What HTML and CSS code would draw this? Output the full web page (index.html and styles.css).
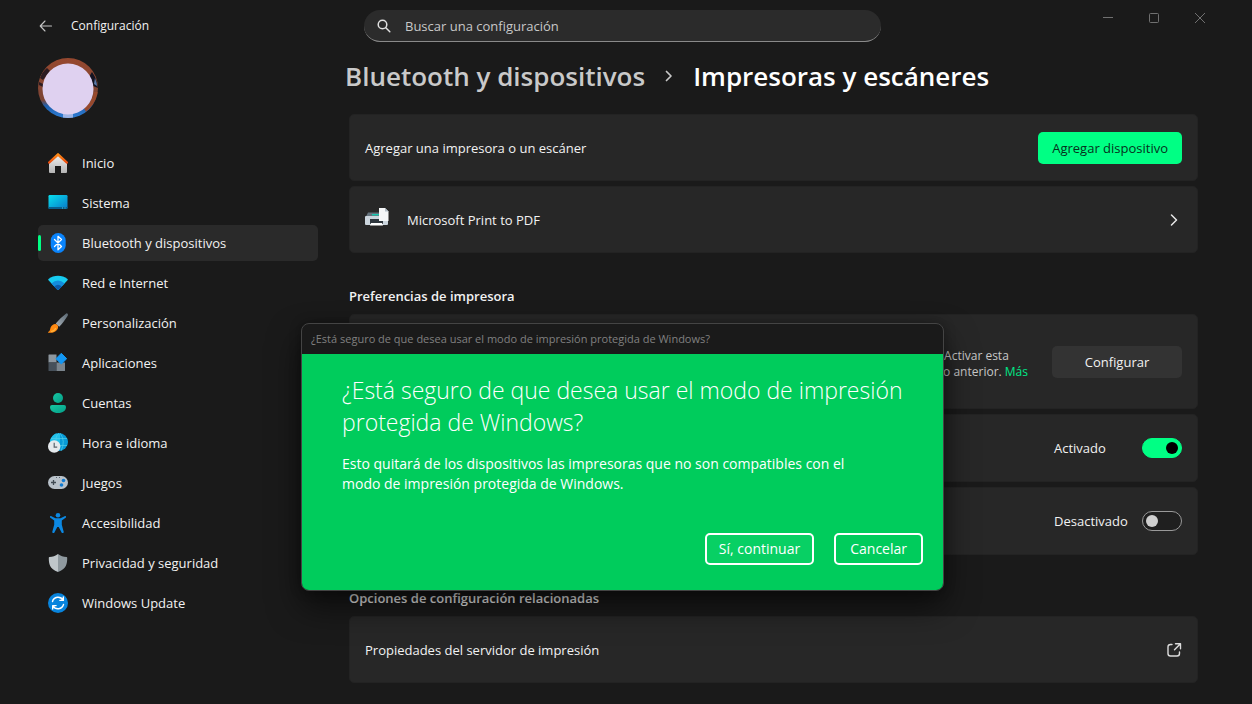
FILE: index.html
```html
<!DOCTYPE html>
<html lang="es">
<head>
<meta charset="utf-8">
<meta name="viewport" content="width=device-width, initial-scale=1">
<title>Configuración</title>
<link rel="stylesheet" href="styles.css">
</head>
<body>
<header class="titlebar">
  <div class="titlebar-left">
    <button class="icon-button" type="button" aria-label="Atrás">
      <svg width="14" height="14" viewBox="0 0 14 14" fill="none" stroke="#c4c4c4" stroke-width="1.1" stroke-linecap="round" stroke-linejoin="round"><path d="M12.500 7H1.500M6 2 1.200 7 6 12"/></svg>
    </button>
    <span class="app-name">Configuración</span>
  </div>
  <label class="search">
    <svg width="14" height="14" viewBox="0 0 14 14" fill="none" stroke="#e0e0e0" stroke-width="1.500" stroke-linecap="round"><circle cx="5.500" cy="5.500" r="4.300"/><path d="m8.800 8.800 4 4"/></svg>
    <input class="search-input" type="text" placeholder="Buscar una configuración" aria-label="Buscar una configuración">
  </label>
  <div class="window-controls">
    <button class="icon-button" type="button" aria-label="Minimizar"><svg width="12" height="12" viewBox="0 0 12 12" fill="none" stroke="#707070"><path d="M1 5.500h10"/></svg></button>
    <button class="icon-button" type="button" aria-label="Maximizar"><svg width="12" height="12" viewBox="0 0 12 12" fill="none" stroke="#707070"><rect x="1.500" y="1.500" width="9" height="9" rx="1"/></svg></button>
    <button class="icon-button" type="button" aria-label="Cerrar"><svg width="12" height="12" viewBox="0 0 12 12" fill="none" stroke="#707070"><path d="m1 1 10 10M11 1 1 11"/></svg></button>
  </div>
</header>

<div class="layout">
  <aside class="sidebar">
    <svg class="avatar" width="60" height="60" viewBox="0 0 60 60">
      <defs>
        <linearGradient id="av" x1="0" y1="0" x2="0" y2="1"><stop offset="0" stop-color="#96482f"/><stop offset=".7" stop-color="#7c4434"/><stop offset=".8" stop-color="#1e5fae"/><stop offset="1" stop-color="#2f7fd6"/></linearGradient>
        <clipPath id="av-clip"><circle cx="30" cy="30" r="30"/></clipPath>
      </defs>
      <g clip-path="url(#av-clip)">
        <rect width="60" height="60" fill="url(#av)"/>
        <path d="M54 14q5 7 6 16l-5-2-4-9z" fill="#151422"/><path d="M57 20q2 5 2 8l-3-2z" fill="#5b7aa8"/>
        <path d="M2 20q2-6 7-10l3 3-7 9z" fill="#2c1c22"/><path d="M1 24l4 2v3l-4-2z" fill="#2c1c22"/>
        <path d="M60 34q-3 13-12 20l-2-4q9-7 10-16z" fill="#97492d"/>
        <path d="M25 56h10v4H25z" fill="#9db4e4"/>
      </g>
      <circle cx="30" cy="31" r="25.500" fill="#dfd1f0"/>
    </svg>
    <nav>
      <ul class="nav">
        <li><a class="nav-link" href="#"><svg class="nav-icon" viewBox="0 0 20 20"><defs><linearGradient id="hw" x1="0" y1="0" x2="0" y2="1"><stop stop-color="#f0f0f0"/><stop offset="1" stop-color="#b4b4b4"/></linearGradient><linearGradient id="hr" x1="0" y1="0" x2="0" y2="1"><stop stop-color="#ff9518"/><stop offset="1" stop-color="#e8420c"/></linearGradient></defs><path d="M1 9.500 10 2l9 7.500V19a1 1 0 0 1-1 1h-5v-7H7v7H2a1 1 0 0 1-1-1z" fill="url(#hw)"/><path d="M9.200.4a1.200 1.200 0 0 1 1.600 0l8.900 8.300a1.100 1.100 0 0 1-1.500 1.700L10 3.200l-8.200 7.200A1.100 1.100 0 0 1 .3 8.700z" fill="url(#hr)"/></svg>Inicio</a></li>
        <li><a class="nav-link" href="#"><svg class="nav-icon" viewBox="0 0 20 20"><defs><linearGradient id="sy" x1="0" y1="0" x2="1" y2="1"><stop stop-color="#08e0ee"/><stop offset="1" stop-color="#0878c8"/></linearGradient></defs><rect x=".5" y="2" width="19" height="14" rx="1.200" fill="url(#sy)"/><path d="M.5 14h19v.7a1.300 1.300 0 0 1-1.300 1.300H1.800a1.300 1.300 0 0 1-1.300-1.300z" fill="#086090"/><path d="M14 15h1M16.500 15h1" stroke="#45c8ed"/></svg>Sistema</a></li>
        <li><a class="nav-link is-active" href="#" aria-current="page"><svg class="nav-icon" viewBox="0 0 20 20"><rect x="2.700" width="15" height="20" rx="7.500" fill="#0a84fc"/><path d="m6.500 6.500 7 7L10 16.700V3.300l3.500 3.200-7 7" fill="none" stroke="#fff" stroke-width="1.300" stroke-linejoin="round" stroke-linecap="round"/></svg>Bluetooth y dispositivos</a></li>
        <li><a class="nav-link" href="#"><svg class="nav-icon" viewBox="0 0 20 20"><path d="M.5 7.300a1 1 0 0 1 0-1.300C5.800 1.700 14.200 1.700 19.500 6a1 1 0 0 1 0 1.300l-8.700 9.300a1.100 1.100 0 0 1-1.600 0z" fill="#17ccf1"/><path d="M3.300 10.400q6.700-6 13.400 0l-5.900 6.200a1.100 1.100 0 0 1-1.600 0z" fill="#138ddd"/><path d="M6.200 13.400q3.800-3.400 7.600 0l-3 3.200a1.100 1.100 0 0 1-1.600 0z" fill="#0b5cad"/></svg>Red e Internet</a></li>
        <li><a class="nav-link" href="#"><svg class="nav-icon" viewBox="0 0 20 20"><defs><linearGradient id="br" x1="1" y1="0" x2="0" y2="1"><stop stop-color="#596772"/><stop offset="1" stop-color="#aab3bb"/></linearGradient></defs><path d="M19.300.4c1.200.9.500 2.200-.1 3.200-2.500 4-5 7.300-8 10.200l-3.500-3.300C11 7 14.700 3.200 18.200.6q.6-.5 1.100-.2z" fill="url(#br)"/><path d="M9 11.500c1.400 1.300 1.500 3.200.3 5-1.800 2.700-5.300 3.800-9 3.200-.6-.2-.3-.7.200-1 1.800-1 1.500-2.600 2.200-4.500C3.800 11.500 7 10 9 11.500z" fill="#ff8a13"/><path d="M3 18.500q3.500-.3 4.800-3.500" fill="none" stroke="#ffb53c" stroke-width="1.200"/></svg>Personalización</a></li>
        <li><a class="nav-link" href="#"><svg class="nav-icon" viewBox="0 0 20 20"><path d="M1 1.500h7.500v8H.5V2q0-.5.500-.5z" fill="#8d979f"/><path d="M.500 9.500h8V18H1q-.5 0-.5-.5z" fill="#46505a"/><path d="M8.500 9.500H17v8q0 .5-.5.500h-8z" fill="#7b858d"/><path d="M13.300.3 18.700 5.700 13.300 11 8 5.700z" fill="#1397f3" stroke="#1397f3" stroke-linejoin="round"/></svg>Aplicaciones</a></li>
        <li><a class="nav-link" href="#"><svg class="nav-icon" viewBox="0 0 20 20"><defs><linearGradient id="us" x1="0" y1="0" x2="1" y2="1"><stop stop-color="#17c7a2"/><stop offset="1" stop-color="#049e88"/></linearGradient></defs><circle cx="10" cy="5" r="5" fill="url(#us)"/><path d="M4 12h12a2 2 0 0 1 2 2c0 3.500-3 6-8 6s-8-2.500-8-6a2 2 0 0 1 2-2z" fill="url(#us)"/></svg>Cuentas</a></li>
        <li><a class="nav-link" href="#"><svg class="nav-icon" viewBox="0 0 20 20"><circle cx="11" cy="9" r="9" fill="#089bd7"/><path d="M8 .6C5 2 2.300 5 2 8.500L12 16V1z" fill="#22c0e9"/><path d="M3 5.500h16M10 12.500h9M11 0q-5 5-2 10M12 0q6 8 1 18" fill="none" stroke="#4fcdea" stroke-width=".7"/><circle cx="6.200" cy="13.500" r="6.200" fill="#e5e9ec"/><path d="M6.200 9.800v4.300h3" fill="none" stroke="#59636b" stroke-width="1.200"/></svg>Hora e idioma</a></li>
        <li><a class="nav-link" href="#"><svg class="nav-icon" viewBox="0 0 20 20"><rect y="3" width="20" height="13" rx="6.500" fill="#b9c2ca"/><path d="M8 4.500h1M11 4.500h1" stroke="#59646e"/><path d="M3 9.500h5M5.500 7v5" stroke="#414b54" stroke-width="1.300"/><circle cx="15.500" cy="7.500" r="1.800" fill="#117bd0"/><circle cx="13.500" cy="12" r="1.800" fill="#117bd0"/></svg>Juegos</a></li>
        <li><a class="nav-link" href="#"><svg class="nav-icon" viewBox="0 0 20 20" fill="#0c88e2"><circle cx="10" cy="2.300" r="2.300"/><path d="M3.400 3.200 7.500 5.300h5l4.100-2.100c1.200-.5 2 .9 1 1.600L13.800 7.500v4.200l1.900 7c.3 1.400-1.600 1.900-2.100.7L10.700 14H9.300l-2.900 5.400c-.5 1.200-2.400.7-2.100-.7l1.900-7V7.500L2.400 4.800c-1-.7-.2-2.100 1-1.600z"/></svg>Accesibilidad</a></li>
        <li><a class="nav-link" href="#"><svg class="nav-icon" viewBox="0 0 20 20"><path d="M10 1c2.500 2 5.500 3 8.500 3q.7 0 .7.800c0 6-.7 11.200-9.200 14.200z" fill="#8f999f"/><path d="M10 1C7.500 3 4.500 4 1.500 4q-.7 0-.7.800C.8 10.800 1.500 16 10 19z" fill="#bfc6ca"/></svg>Privacidad y seguridad</a></li>
        <li><a class="nav-link" href="#"><svg class="nav-icon" viewBox="0 0 20 20"><circle cx="10" cy="10" r="10" fill="#0884dd"/><g fill="none" stroke="#fff" stroke-width="1.400" stroke-linecap="round" stroke-linejoin="round"><path d="M4.500 8.500A5.700 5.700 0 0 1 15 7.200M15.300 4v3.400h-3.400M15.500 11.500A5.700 5.700 0 0 1 5 12.800M4.700 16v-3.400h3.400"/></g></svg>Windows Update</a></li>
      </ul>
    </nav>
  </aside>

  <main class="content">
    <h1 class="breadcrumb">
      <a class="crumb" href="#">Bluetooth y dispositivos</a>
      <svg width="8" height="12" viewBox="0 0 8 12" fill="none" stroke="#c8c8c8" stroke-width="1.700" stroke-linecap="round" stroke-linejoin="round"><path d="m1.500 1.500 4.500 4.500-4.500 4.500"/></svg>
      <span>Impresoras y escáneres</span>
    </h1>

    <div class="cards">
      <section class="card">
        <span>Agregar una impresora o un escáner</span>
        <button class="button button-accent" type="button">Agregar dispositivo</button>
      </section>
      <a class="card" href="#">
        <span class="printer">
          <svg width="24" height="24" viewBox="0 0 24 24"><path d="M3 4.500h17l2 4H1z" fill="#65727c"/><path d="M1 8h21q1 0 1 1v7q0 1-1 1H1q-1 0-1-1V9q0-1 1-1z" fill="#cbd5dd"/><path d="M7 6.700h7" stroke="#16c9b0" stroke-width="1.400"/><path d="M5 11h13v5H5z" fill="#2e363d"/><path d="M6 15h11l1 2.500H5z" fill="#fff"/><path d="M14 0h6l3.500 3.500V13H14z" fill="#f5f7f8"/><path d="M20 0v3.500h3.500" fill="#b6c1c9"/></svg>
          <span>Microsoft Print to PDF</span>
        </span>
        <svg class="chevron" width="8" height="12" viewBox="0 0 8 12" fill="none" stroke="#e8e8e8" stroke-width="1.500" stroke-linecap="round" stroke-linejoin="round"><path d="M1.500 1 6.500 6l-5 5"/></svg>
      </a>
    </div>

    <h2 class="section-title">Preferencias de impresora</h2>
    <div class="cards">
      <section class="card card-tall">
        <p class="hint"><span class="hint-line">Activar esta</span>lo anterior. <a class="more" href="#">Más</a></p>
        <button class="button button-wide" type="button">Configurar</button>
      </section>
      <section class="card card-switch">
        <label class="switch-row"><span>Activado</span><input class="switch" type="checkbox" role="switch" checked></label>
      </section>
      <section class="card card-switch">
        <label class="switch-row"><span>Desactivado</span><input class="switch" type="checkbox" role="switch"></label>
      </section>
    </div>

    <h2 class="section-title">Opciones de configuración relacionadas</h2>
    <div class="cards">
      <a class="card" href="#">
        <span>Propiedades del servidor de impresión</span>
        <svg width="16" height="16" viewBox="0 0 16 16" fill="none" stroke="#dcdcdc" stroke-width="1.400" stroke-linecap="round" stroke-linejoin="round"><path d="M6 2.500H4.500a2.500 2.500 0 0 0-2.500 2.500v6.500A2.500 2.500 0 0 0 4.500 14H11a2.500 2.500 0 0 0 2.500-2.500V10M9.500 1.700h5v5M14.200 2 8.500 7.700"/></svg>
      </a>
    </div>
  </main>
</div>

<div class="dialog" role="dialog" aria-labelledby="dialog-title">
  <div class="dialog-bar">¿Está seguro de que desea usar el modo de impresión protegida de Windows?</div>
  <div class="dialog-body">
    <h2 class="dialog-title" id="dialog-title">¿Está seguro de que desea usar el modo de impresión protegida de Windows?</h2>
    <p class="dialog-text">Esto quitará de los dispositivos las impresoras que no son compatibles con el modo de impresión protegida de Windows.</p>
    <div class="dialog-actions">
      <button class="dialog-button" type="button">Sí, continuar</button>
      <button class="dialog-button dialog-button-cancel" type="button">Cancelar</button>
    </div>
  </div>
</div>
</body>
</html>
```

FILE: styles.css
```css
* {
  box-sizing: border-box;
}

body {
  margin: 0;
  position: relative;
  min-height: 100vh;
  background: #1a1a1a;
  color: #f2f2f2;
  font: 13px/20px "Segoe UI", "Open Sans", "Noto Sans", sans-serif;
}

h1, h2, p, ul {
  margin: 0;
  padding: 0;
}

a {
  color: inherit;
  text-decoration: none;
}

button, input {
  font: inherit;
  color: inherit;
}

svg {
  display: block;
  flex: none;
}

.titlebar {
  display: grid;
  grid-template-columns: 364px minmax(0, 517px) 1fr;
  align-items: start;
  height: 52px;
}

.titlebar-left {
  display: flex;
  align-items: center;
  gap: 8px;
  padding: 16px 0 0 35px;
}

.icon-button {
  display: grid;
  place-items: center;
  width: 22px;
  height: 20px;
  padding: 0;
  border: 0;
  background: none;
}

.app-name {
  padding-left: 6px;
  font-size: 12px;
}

.search {
  display: flex;
  align-items: center;
  gap: 14px;
  height: 32px;
  margin-top: 10px;
  padding: 0 13px;
  border-radius: 16px;
  border-bottom: 1px solid #8a8a8a;
  background: #2b2b2b;
}

.search-input {
  flex: 1;
  min-width: 0;
  padding: 0;
  border: 0;
  outline: 0;
  background: none;
}

.search-input::placeholder {
  color: #c8c8c8;
  opacity: 1;
}

.window-controls {
  display: flex;
  justify-content: flex-end;
  gap: 24px;
  padding: 8px 41px 0 0;
}

.layout {
  display: grid;
  grid-template-columns: 280px minmax(0, 1fr);
  gap: 31px;
  padding: 6px 54px 20px 38px;
}

.avatar {
  margin-bottom: 27px;
}

.nav {
  display: grid;
  gap: 4px;
  list-style: none;
}

.nav-link {
  position: relative;
  display: flex;
  align-items: center;
  gap: 14px;
  height: 36px;
  padding: 0 10px;
  border-radius: 5px;
}

.nav-link.is-active {
  background: #2a2a2a;
}

.nav-link.is-active::before {
  content: "";
  position: absolute;
  left: 0;
  top: 10px;
  width: 3px;
  height: 16px;
  border-radius: 2px;
  background: #00ff84;
}

.nav-icon {
  width: 20px;
  height: 20px;
}

.breadcrumb {
  display: flex;
  align-items: center;
  gap: 20px;
  margin-left: -4px;
  padding-bottom: 20px;
  font-size: 26px;
  line-height: 36px;
  font-weight: 600;
  white-space: nowrap;
  color: #fff;
}

.crumb {
  color: #c9c9c9;
}

.cards {
  display: grid;
  gap: 5px;
}

.card {
  display: flex;
  align-items: center;
  justify-content: space-between;
  min-height: 67px;
  padding: 8px 15px;
  border: 1px solid #232323;
  border-radius: 5px;
  background: #272727;
}

.card-tall {
  min-height: 95px;
  justify-content: flex-end;
  gap: 24px;
}

.card-switch {
  min-height: 68px;
}

.printer {
  display: flex;
  align-items: center;
  gap: 18px;
}

.chevron {
  margin-right: 4px;
}

.button {
  height: 32px;
  padding: 0 14px;
  border: 0;
  border-radius: 5px;
  background: #333;
  white-space: nowrap;
}

.button-accent {
  background: #00ff84;
  color: #06301c;
}

.button-wide {
  width: 130px;
}

.hint {
  padding-top: 4px;
  font-size: 12px;
  line-height: 16px;
  color: #c8c8c8;
}

.hint-line {
  display: block;
  padding-left: 4px;
}

.more {
  color: #00e887;
}

.section-title {
  padding: 33px 0 8px;
  font-size: 13px;
  line-height: 20px;
  font-weight: 600;
}

.switch-row {
  display: flex;
  align-items: center;
  justify-content: space-between;
  width: 128px;
  margin-left: auto;
}

.switch {
  appearance: none;
  display: flex;
  align-items: center;
  flex: none;
  width: 40px;
  height: 20px;
  margin: 0;
  padding: 0 3px;
  border: 1px solid #999;
  border-radius: 10px;
  background: #1f1f1f;
}

.switch::before {
  content: "";
  width: 12px;
  height: 12px;
  border-radius: 50%;
  background: #cfcfcf;
}

.switch:checked {
  justify-content: flex-end;
  border-color: #00ff84;
  background: #00ff84;
}

.switch:checked::before {
  background: #000;
}

.dialog {
  position: absolute;
  top: 323px;
  left: 301px;
  width: 643px;
  max-width: calc(100% - 301px);
  border: 1px solid #444;
  border-radius: 8px;
  overflow: hidden;
  background: #1a1a1a;
  box-shadow: 0 16px 32px rgba(0, 0, 0, .55), 0 0 12px rgba(0, 0, 0, .3);
}

.dialog-bar {
  padding: 0 9px;
  font-size: 11px;
  line-height: 30px;
  color: #808080;
}

.dialog-body {
  padding: 20px 20px 25px 40px;
  background: #00cc5c;
  color: #fff;
}

.dialog-title {
  font-size: 23px;
  line-height: 32px;
  font-weight: 300;
}

.dialog-text {
  max-width: 530px;
  padding-top: 16px;
  font-size: 14px;
  line-height: 20px;
}

.dialog-actions {
  display: flex;
  justify-content: flex-end;
  gap: 20px;
  padding-top: 39px;
}

.dialog-button {
  height: 32px;
  padding: 0 12px;
  border: 2px solid #fff;
  border-radius: 5px;
  background: #08d064;
  font-size: 14px;
}

.dialog-button-cancel {
  padding: 0 14px;
  background: none;
}
```
